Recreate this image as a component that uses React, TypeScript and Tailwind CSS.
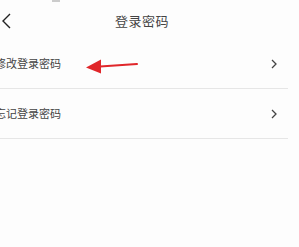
import React from "react";

function ChevronRight() {
  return (
    <svg width="6" height="10" viewBox="0 0 6 10" className="shrink-0">
      <path d="M1 1 L5 5 L1 9" fill="none" stroke="#444" strokeWidth="1.3" />
    </svg>
  );
}

function Row({ label }: { label: string }) {
  return (
    <div className="flex h-[50px] items-center justify-between border-b border-[#e6e6e6] pr-[11px]">
      <span className="-ml-[5px] text-[11px] text-[#444]">{label}</span>
      <ChevronRight />
    </div>
  );
}

export default function App() {
  return (
    <div
      className="relative h-[247px] w-[299px] overflow-hidden bg-[#fdfdfd]"
      style={{ fontFamily: '"Noto Sans CJK SC", "Noto Sans", sans-serif' }}
    >
      <div className="absolute left-[52px] top-0 h-[2px] w-[8px] bg-[#ccc]" />
      <div className="flex h-[39px] items-center pt-[3px]">
        <svg width="12" height="18" viewBox="0 0 12 18" className="ml-[1px] shrink-0">
          <path d="M9 2 L2 9 L9 16" fill="none" stroke="#222" strokeWidth="1.4" />
        </svg>
        <span className="ml-[102px] text-[13px] tracking-[0.5px] text-[#444]">登录密码</span>
      </div>
      <div className="w-[288px]">
        <Row label="修改登录密码" />
        <Row label="忘记登录密码" />
      </div>
      <svg
        className="absolute left-[84px] top-[57px]"
        width="56"
        height="18"
        viewBox="0 0 56 18"
      >
        <path d="M16 9.5 L53 7" stroke="#e0262a" strokeWidth="2" strokeLinecap="round" />
        <path d="M2 10.5 L17 2.5 L17 16.5 Z" fill="#e0262a" />
      </svg>
    </div>
  );
}
